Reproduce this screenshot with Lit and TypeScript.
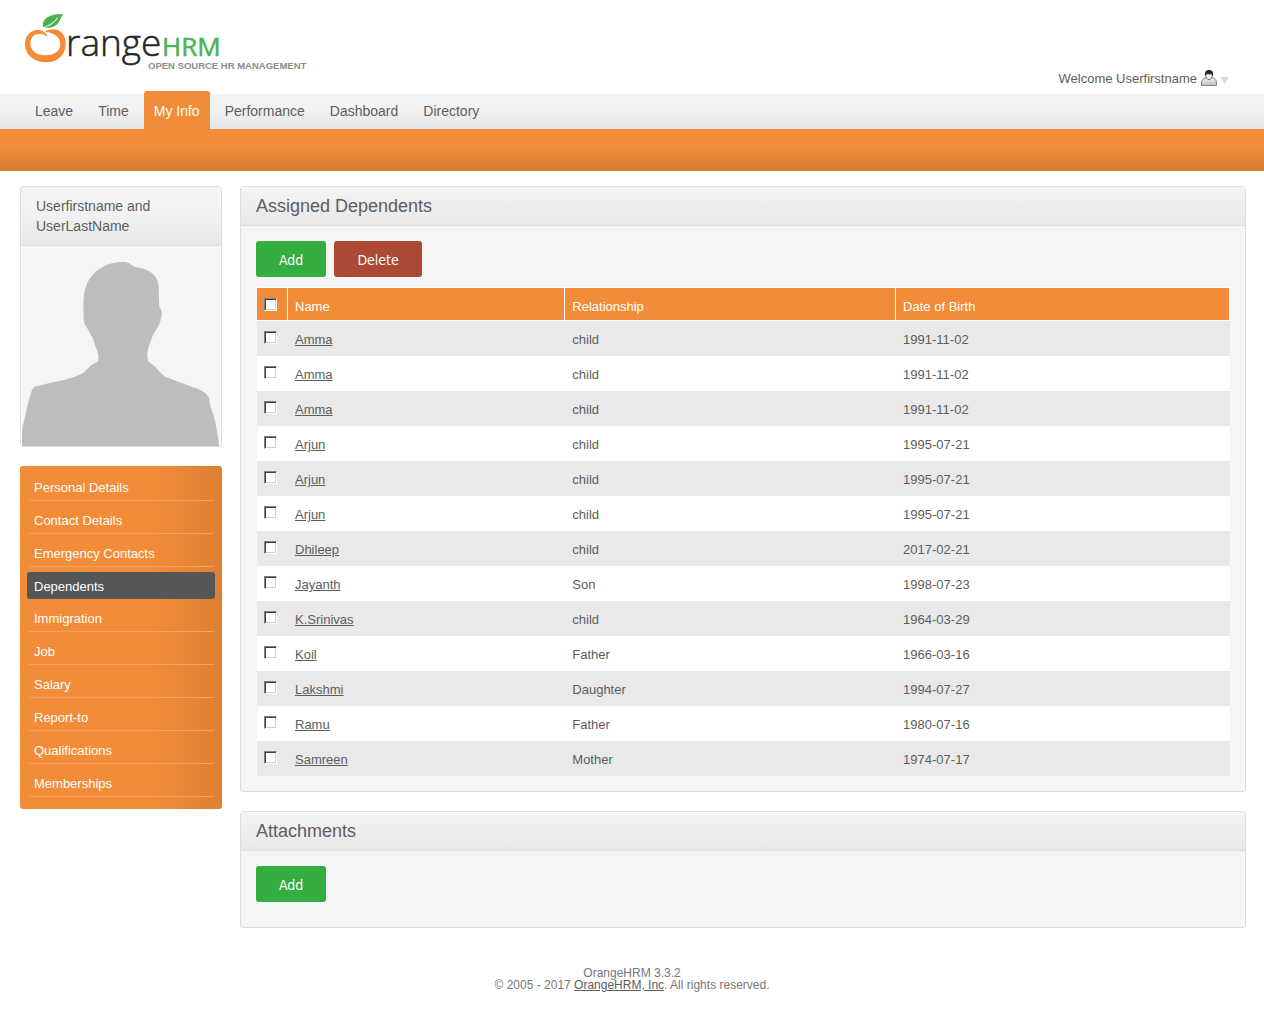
import { LitElement, html, css, svg } from "lit";
import { customElement, property } from "lit/decorators.js";
import { classMap } from "lit/directives/class-map.js";

const base = css`
  :host { display: block; font-family: "Liberation Sans", Arial, sans-serif; font-size: 13px; color: #5d5d5d; }
  * { box-sizing: border-box; }
  h1, h2, ul { margin: 0; padding: 0; font-weight: normal; }
  ul { list-style: none; }
`;

@customElement("brand-logo")
class BrandLogo extends LitElement {
  static styles = [base, css`
    svg { display: block; }
    .word { font: 300 74px "Open Sans", "Noto Sans", sans-serif; fill: #262626; stroke: #262626; stroke-width: 1; }
    .hrm { font: 400 52px "Open Sans", "Noto Sans", sans-serif; fill: #4bb254; stroke: #4bb254; stroke-width: 1; }
    .tag { font: bold 19px "Liberation Sans", Arial, sans-serif; fill: #8d8d8d; }
  `];
  render() {
    return html`<svg width="320" height="76" viewBox="0 0 640 152" role="img" aria-label="OrangeHRM">
      ${svg`
      <g transform="translate(20 0) scale(0.6667)">
        <path fill="#f58b38" d="M113 111 C109 97 98 90 82 90 C60 91 45 108 45 133 C45 165 72 187 108 187 C145 187 167 162 167 132 C167 105 152 88 130 88 C118 88 109 91 106 96 C126 97 151 107 151 133 C151 153 133 166 107 166 C80 166 61 152 61 130 C61 112 73 101 88 101 C100 101 106 105 113 111 Z"/>
        <path fill="#4bb254" d="M99 80 C96 56 116 42 159 42 C147 62 146 86 106 83 Z"/>
        <path fill="none" stroke="#fff" stroke-width="3" d="M100 83 C122 76 134 66 143 53"/>
      </g>
      <text class="word" x="132" y="111">range</text>
      <text class="hrm" x="324" y="111">HRM</text>
      <text class="tag" x="296" y="138">OPEN SOURCE HR MANAGEMENT</text>`}
    </svg>`;
  }
}

@customElement("main-nav")
class MainNav extends LitElement {
  static items = ["Leave", "Time", "My Info", "Performance", "Dashboard", "Directory"];
  static styles = [base, css`
    .bar { height: 35px; background: linear-gradient(#f3f3f3 40%, #e5e5e5); }
    ul { display: flex; gap: 5px; align-items: flex-end; height: 35px; padding-left: 25px; }
    a { display: block; height: 35px; padding: 0 10px; font-size: 14px; line-height: 35px; color: #5d5d5d; text-decoration: none; }
    .active { height: 38px; padding-top: 3px; color: #fff; background: #f38c38; border-radius: 3px 3px 0 0; }
    .sub { height: 42px; background: linear-gradient(#f38c38 45%, #d67a31); border-bottom: 1px solid #e5873c; }
  `];
  render() {
    return html`<nav>
      <div class="bar"><ul>${MainNav.items.map((t) => html`
        <li><a href="#" class=${classMap({ active: t === "My Info" })}>${t}</a></li>`)}</ul></div>
      <div class="sub"></div>
    </nav>`;
  }
}

@customElement("profile-card")
class ProfileCard extends LitElement {
  static styles = [base, css`
    .card { border: 1px solid #dedede; border-radius: 3px; overflow: hidden; }
    h1 { padding: 9px 15px; font-size: 14px; line-height: 20px; background: linear-gradient(#f4f4f4 30%, #e8e8e8); border-bottom: 1px solid #dedede; }
    .photo { padding: 0 1px; }
    svg { display: block; width: 100%; height: 200px; background: #f5f5f5; }
  `];
  render() {
    return html`<section class="card">
      <h1>Userfirstname and UserLastName</h1>
      <div class="photo"><svg viewBox="36 198 594 600" preserveAspectRatio="none" role="img" aria-label="Employee photo">
        <path fill="#bdbdbd" d="M36 798 V752 C44 715 55 660 66 630 C70 620 76 619 86 617 C125 606 190 598 220 578 C238 563 240 555 262 546 C268 538 265 523 262 513 C254 495 252 480 247 472 C238 460 236 448 225 434 C219 420 221 400 220 375 C221 345 224 320 238 298 C262 260 303 244 347 246 C361 248 366 260 380 262 C425 269 446 290 446 325 L448 380 C456 391 457 400 453 415 C449 440 432 455 427 470 C420 490 408 512 413 537 C416 550 424 550 433 557 C445 568 452 582 468 591 C500 604 535 616 560 625 C580 635 595 643 598 658 C599 685 611 700 615 722 C621 750 624 775 627 798 Z"/>
      </svg></div>
    </section>`;
  }
}

@customElement("side-menu")
class SideMenu extends LitElement {
  static items = ["Personal Details", "Contact Details", "Emergency Contacts", "Dependents", "Immigration", "Job", "Salary", "Report-to", "Qualifications", "Memberships"];
  static styles = [base, css`
    ul { display: flex; flex-direction: column; gap: 5px; padding: 7px 7px 12px; border-radius: 3px; background: linear-gradient(to right, #f38c38 65%, #dd8033); }
    a { display: block; padding: 2px 7px 0; line-height: 25px; color: #fff; text-decoration: none; border-bottom: 1px solid #f8a05a; border-radius: 3px; }
    .active { background: #555658; border-bottom: 0; }
  `];
  render() {
    return html`<nav><ul>${SideMenu.items.map((t) => html`
      <li><a href="#" class=${classMap({ active: t === "Dependents" })}>${t}</a></li>`)}</ul></nav>`;
  }
}

@customElement("info-panel")
class InfoPanel extends LitElement {
  @property() heading = "";
  static styles = [base, css`
    .panel { border: 1px solid #dedede; border-radius: 3px; background: #f5f5f5; }
    h2 { padding: 0 15px; font-size: 18px; line-height: 38px; background: linear-gradient(#f4f4f4, #e8e8e8); border-bottom: 1px solid #dedede; }
    .body { padding: 15px; }
  `];
  render() {
    return html`<section class="panel"><h2>${this.heading}</h2><div class="body"><slot></slot></div></section>`;
  }
}

interface Dependent { name: string; relation: string; born: string; }

@customElement("app-root")
class AppRoot extends LitElement {
  static rows: Dependent[] = [
    { name: "Amma", relation: "child", born: "1991-11-02" },
    { name: "Amma", relation: "child", born: "1991-11-02" },
    { name: "Amma", relation: "child", born: "1991-11-02" },
    { name: "Arjun", relation: "child", born: "1995-07-21" },
    { name: "Arjun", relation: "child", born: "1995-07-21" },
    { name: "Arjun", relation: "child", born: "1995-07-21" },
    { name: "Dhileep", relation: "child", born: "2017-02-21" },
    { name: "Jayanth", relation: "Son", born: "1998-07-23" },
    { name: "K.Srinivas", relation: "child", born: "1964-03-29" },
    { name: "Koil", relation: "Father", born: "1966-03-16" },
    { name: "Lakshmi", relation: "Daughter", born: "1994-07-27" },
    { name: "Ramu", relation: "Father", born: "1980-07-16" },
    { name: "Samreen", relation: "Mother", born: "1974-07-17" },
  ];
  static styles = [base, css`
    :host { background: #fff; }
    header { display: flex; justify-content: space-between; align-items: flex-end; height: 94px; padding-right: 35px; }
    brand-logo { align-self: flex-start; }
    .welcome { display: flex; align-items: flex-start; gap: 4px; padding-bottom: 6px; line-height: 18px; color: #5d5d5d; text-decoration: none; }
    .welcome svg { display: block; }
    .layout { display: flex; align-items: flex-start; gap: 18px; padding: 15px 18px 0 20px; }
    aside { flex: 0 0 202px; display: flex; flex-direction: column; gap: 19px; }
    main { flex: 1; min-width: 0; display: flex; flex-direction: column; gap: 19px; }
    .actions { display: flex; gap: 8px; margin-bottom: 10px; }
    button { height: 36px; padding: 1px 23px 0; border: 0; border-radius: 3px; font: 14px "DejaVu Sans Condensed", "Open Sans", sans-serif; color: #fff; background: #34ad41; }
    button.delete { background: #aa4935; }
    table { width: 100%; table-layout: fixed; border-collapse: separate; border-spacing: 0; border-left: 1px solid #f5f5f5; }
    .c-check { width: 31px; }
    .c-name { width: 28.5%; }
    .c-rel { width: 34%; }
    th { padding: 10px 7px 4px; line-height: 18px; font-weight: normal; text-align: left; vertical-align: top; color: #fff; background: #f38c38; border: solid #fff; border-width: 1px 1px 1px 0; }
    td { padding: 10px 7px 7px; line-height: 18px; vertical-align: top; background: #fff; }
    tr:nth-child(odd) td { background: #e9e9e9; }
    td a, footer a { color: #5d5d5d; }
    input { display: block; appearance: none; width: 13px; height: 13px; margin: 0; background: #fff; border: 1px solid; border-color: #808080 #fff #fff #808080; box-shadow: inset 1px 1px #404040, inset -1px -1px #d4d0c8; }
    footer { padding: 39px 0 30px; font-size: 12px; line-height: 12px; text-align: center; color: #777; }
  `];
  render() {
    return html`
      <header>
        <brand-logo></brand-logo>
        <a class="welcome" href="#">Welcome Userfirstname
          <svg width="28" height="16" viewBox="0 0 28 16" aria-hidden="true">
            <defs><linearGradient id="coat" x2="0" y2="1"><stop offset="0" stop-color="#f4f4f4"/><stop offset="1" stop-color="#bdbdbd"/></linearGradient></defs>
            <path fill="url(#coat)" stroke="#858585" d="M0.500 15.500 V13 C0.500 10 2 8.500 5 7.500 H11 C14 8.500 15.500 10 15.500 13 V15.500 Z"/>
            <path fill="#f4f4f4" stroke="#666" d="M4.500 4 C4.500 7.500 6 9.500 8 9.500 C10 9.500 11.500 7.500 11.500 4 Z"/>
            <path fill="#222" d="M4 6 C3.500 2 5 0 8 0 C11 0 12.500 2 12 6 C11 5 10.500 4.500 10 3.500 C8 4.500 6.500 3.500 6 3.500 C5.500 4.500 5 5 4 6 Z"/>
            <path fill="#d8d8d8" d="M19 7 H28 L23.500 14 Z"/>
          </svg>
        </a>
      </header>
      <main-nav></main-nav>
      <div class="layout">
        <aside><profile-card></profile-card><side-menu></side-menu></aside>
        <main>
          <info-panel heading="Assigned Dependents">
            <div class="actions"><button type="button">Add</button><button type="button" class="delete">Delete</button></div>
            <table>
              <colgroup><col class="c-check"><col class="c-name"><col class="c-rel"><col></colgroup>
              <thead><tr>
                <th><input type="checkbox" aria-label="Select all"></th>
                <th>Name</th><th>Relationship</th><th>Date of Birth</th>
              </tr></thead>
              <tbody>${AppRoot.rows.map((r) => html`<tr>
                <td><input type="checkbox" aria-label="Select ${r.name}"></td>
                <td><a href="#">${r.name}</a></td><td>${r.relation}</td><td>${r.born}</td>
              </tr>`)}</tbody>
            </table>
          </info-panel>
          <info-panel heading="Attachments">
            <div class="actions"><button type="button">Add</button></div>
          </info-panel>
        </main>
      </div>
      <footer>OrangeHRM 3.3.2<br>© 2005 - 2017 <a href="#">OrangeHRM, Inc</a>. All rights reserved.</footer>
    `;
  }
}
